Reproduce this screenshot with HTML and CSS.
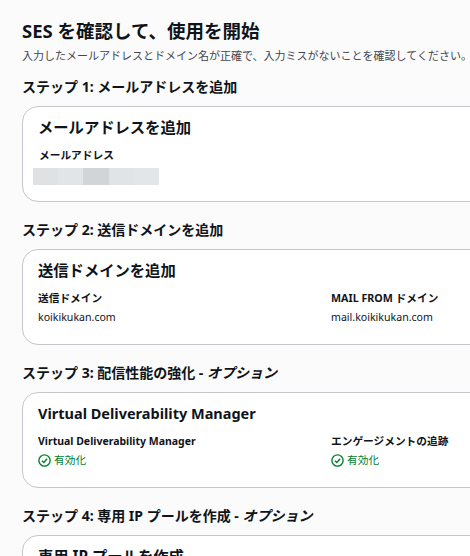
FILE: index.html
```html
<!DOCTYPE html>
<html lang="ja">
<head>
<meta charset="utf-8">
<title>SES を確認して、使用を開始</title>
<link rel="stylesheet" href="styles.css">
</head>
<body>
<main class="page">
  <header class="intro">
    <h1>SES を確認して、使用を開始</h1>
    <p>入力したメールアドレスとドメイン名が正確で、入力ミスがないことを確認してください。</p>
  </header>

  <section class="step">
    <h2>ステップ 1: メールアドレスを追加</h2>
    <div class="card">
      <h3 class="nudge">メールアドレスを追加</h3>
      <div class="grid">
        <div class="nudge">
          <div class="label">メールアドレス</div>
          <div class="redacted">
            <span class="r1"></span><span class="r2"></span><span class="r3"></span><span class="r4"></span><span class="r5"></span>
          </div>
        </div>
      </div>
    </div>
  </section>

  <section class="step">
    <h2>ステップ 2: 送信ドメインを追加</h2>
    <div class="card">
      <h3>送信ドメインを追加</h3>
      <div class="grid">
        <div>
          <div class="label">送信ドメイン</div>
          <div class="value">koikikukan.com</div>
        </div>
        <div>
          <div class="label">MAIL FROM ドメイン</div>
          <div class="value">mail.koikikukan.com</div>
        </div>
      </div>
    </div>
  </section>

  <section class="step">
    <h2>ステップ 3: 配信性能の強化 - <em>オプション</em></h2>
    <div class="card">
      <h3 class="latin">Virtual Deliverability Manager</h3>
      <div class="grid">
        <div>
          <div class="label latin-label">Virtual Deliverability Manager</div>
          <div class="value status">
            <svg viewBox="0 0 16 16" width="13" height="13" aria-hidden="true"><circle cx="8" cy="8" r="6.9" fill="none" stroke="currentColor" stroke-width="1.7"/><path d="M4.9 8.2 7.2 10.5 11.2 5.8" fill="none" stroke="currentColor" stroke-width="1.7"/></svg>
            <span>有効化</span>
          </div>
        </div>
        <div>
          <div class="label">エンゲージメントの追跡</div>
          <div class="value status">
            <svg viewBox="0 0 16 16" width="13" height="13" aria-hidden="true"><circle cx="8" cy="8" r="6.9" fill="none" stroke="currentColor" stroke-width="1.7"/><path d="M4.9 8.2 7.2 10.5 11.2 5.8" fill="none" stroke="currentColor" stroke-width="1.7"/></svg>
            <span>有効化</span>
          </div>
        </div>
      </div>
    </div>
  </section>

  <section class="step">
    <h2>ステップ 4: 専用 IP プールを作成 - <em>オプション</em></h2>
    <div class="card">
      <h3>専用 IP プールを作成</h3>
    </div>
  </section>
</main>
</body>
</html>
```

FILE: styles.css
```css
html, body {
  margin: 0;
  height: 556px;
  overflow: hidden;
  background: #fbfbfb;
}
body {
  font-family: "Noto Sans", "Noto Sans CJK JP", sans-serif;
  color: #0f141a;
}
.page {
  width: 640px;
  padding: 20px 0 0 22px;
  box-sizing: border-box;
}
.intro h1 {
  margin: 0;
  font-size: 18.5px;
  line-height: 22px;
  font-weight: 700;
}
.intro p {
  margin: 6px 0 0;
  font-size: 11px;
  line-height: 16px;
  color: #424650;
  white-space: nowrap;
}
.step {
  height: 143px;
}
.intro + .step {
  margin-top: 13px;
}
.step h2 {
  margin: 0 0 9px;
  font-size: 14px;
  line-height: 20px;
  font-weight: 700;
}
.step h2 em {
  font-style: italic;
}
.card {
  height: 96px;
  margin-left: -0.5px;
  box-sizing: border-box;
  padding: 10px 15.5px;
  background: #fff;
  border: 1px solid #c6c6cd;
  border-radius: 16px;
}
.card h3 {
  margin: 0;
  font-size: 15.3px;
  line-height: 21px;
  font-weight: 700;
}
.card h3.latin {
  font-size: 14.5px;
}
.grid {
  display: grid;
  grid-template-columns: 293px 293px;
  margin-top: 9px;
}
.nudge {
  margin-left: 1px;
}
.label {
  font-size: 10.7px;
  line-height: 16px;
  font-weight: 700;
}
.label.latin-label {
  font-size: 10.5px;
}
.value {
  margin-top: 3px;
  font-size: 10.6px;
  line-height: 16px;
  color: #0f141a;
}
.status {
  display: flex;
  align-items: center;
  gap: 3px;
  color: #00802f;
  font-size: 10.7px;
}
.redacted {
  display: flex;
  margin: 5px 0 0 -6px;
}
.redacted span {
  width: 25.2px;
  height: 17px;
}
.r1 { background: #e0e1e2; }
.r2 { background: #e3e4e5; }
.r3 { background: #d3d4d6; }
.r4 { background: #e2e3e4; }
.r5 { background: #e4e5e6; }
```
